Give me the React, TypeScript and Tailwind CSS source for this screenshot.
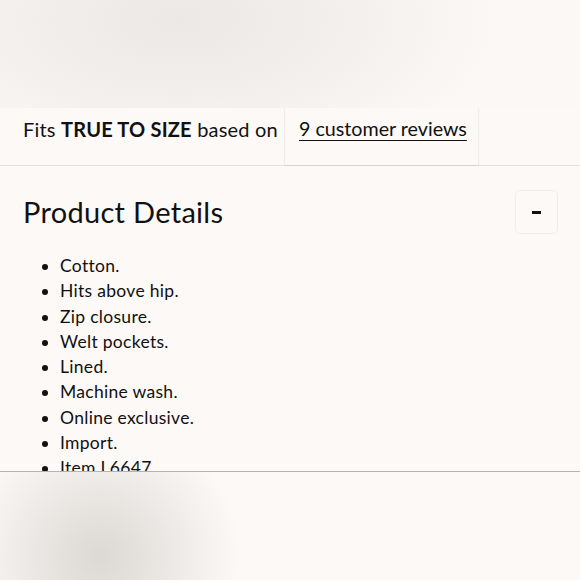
const DETAILS = [
  "Cotton.",
  "Hits above hip.",
  "Zip closure.",
  "Welt pockets.",
  "Lined.",
  "Machine wash.",
  "Online exclusive.",
  "Import.",
  "Item L6647.",
];

export default function App() {
  return (
    <div className="flex h-[580px] w-[580px] flex-col overflow-hidden bg-[#fcf9f7] font-['Lato',sans-serif] text-[#111]">
      {/* blurred image strip */}
      <div className="h-[108px] shrink-0 bg-[radial-gradient(ellipse_320px_160px_at_180px_20px,#ece8e5_0%,#f2efec_50%,#fbf8f6_100%)]" />

      <div className="flex h-[58px] shrink-0 border-b border-[#e4e1de]">
        <div className="flex items-center border-r border-[#f0edea] pb-[16px] pl-[23px] pr-[6px] text-[20px] tracking-[0.2px]">
          <span>
            Fits <b className="font-bold">TRUE TO SIZE</b> based on
          </span>
        </div>
        <div className="flex w-[194px] items-center border-r border-[#f0edea] pb-[16px] pl-[14px] shadow-[0_1px_1px_rgba(0,0,0,0.06)]">
          <a className="text-[19.7px] underline decoration-1 underline-offset-[4px]">9 customer reviews</a>
        </div>
      </div>

      <div className="flex-1 overflow-hidden px-[23px]">
        <div className="mt-[24px] flex items-center justify-between">
          <h2 className="text-[29px] leading-[44px] tracking-[0.3px]">Product Details</h2>
          <button className="mr-[-1px] flex h-[44px] w-[43px] items-center justify-center rounded-[5px] border border-[#f0edea]">
            <span className="block h-[3px] w-[9px] bg-[#111]" />
          </button>
        </div>
        <ul className="mt-[19px] list-disc pl-[37px] text-[17.5px] leading-[25.3px] tracking-[0.3px]">
          {DETAILS.map((d) => (
            <li key={d}>{d}</li>
          ))}
        </ul>
      </div>

      {/* blurred footer image */}
      <div className="h-[109px] shrink-0 border-t border-[#b5b3b1] bg-[radial-gradient(ellipse_140px_140px_at_100px_85px,#dcd8d4_0%,#ebe8e5_50%,#fcf9f7_100%)]" />
    </div>
  );
}
